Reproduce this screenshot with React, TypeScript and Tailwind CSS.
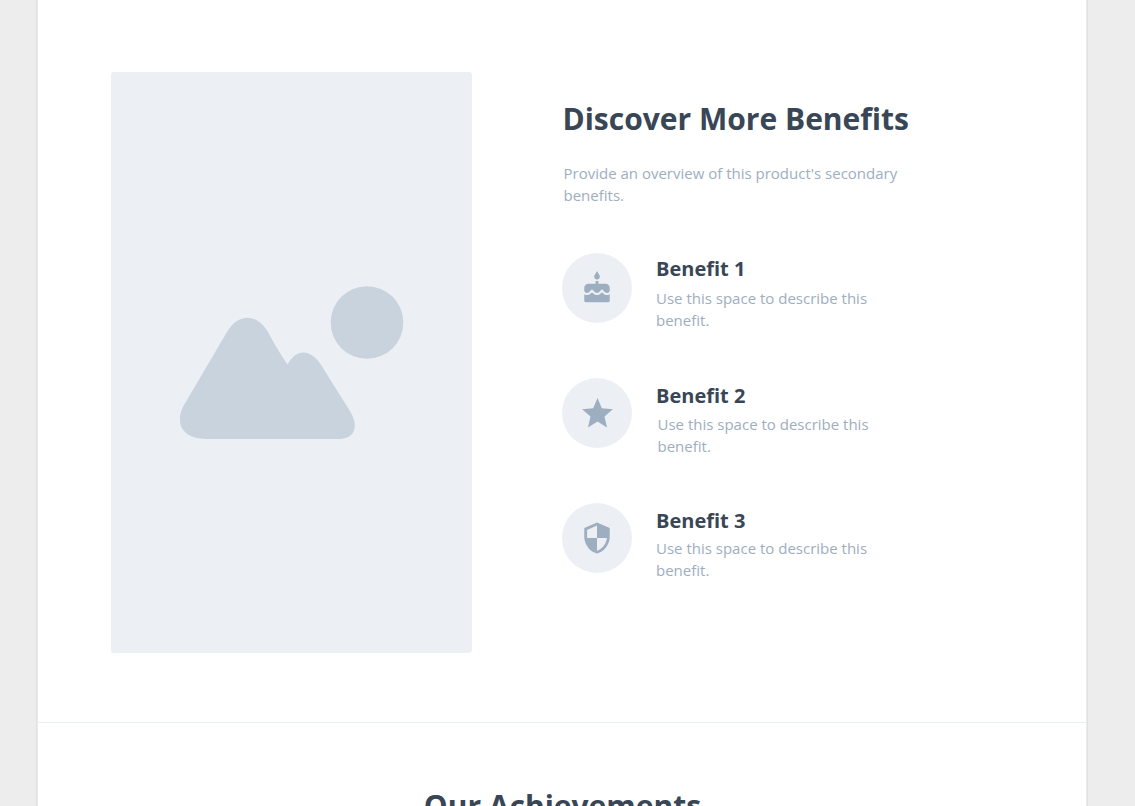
import type { ReactNode } from "react";

type Benefit = {
  title: string;
  icon: ReactNode;
  titleClass: string;
  textClass: string;
};

const benefits: Benefit[] = [
  {
    title: "Benefit 1",
    titleClass: "pt-[2px]",
    textClass: "pt-[4px]",
    icon: (
      <svg viewBox="0 0 24 24" className="size-[34px] fill-[#9eaec1]">
        <path d="M12 6c1.11 0 2-.9 2-2 0-.38-.1-.73-.29-1.03L12 0l-1.71 2.97c-.19.3-.29.65-.29 1.03 0 1.1.9 2 2 2zm4.6 9.99l-1.07-1.07-1.08 1.07c-1.3 1.3-3.58 1.31-4.89 0l-1.07-1.07-1.09 1.07C6.75 16.64 5.88 17 4.96 17c-.73 0-1.4-.23-1.96-.61V21c0 .55.45 1 1 1h16c.55 0 1-.45 1-1v-4.61c-.56.38-1.23.61-1.96.61-.92 0-1.79-.36-2.44-1.01zM18 9h-5V7h-2v2H6c-1.66 0-3 1.34-3 3v1.54c0 1.08.88 1.96 1.96 1.96.52 0 1.02-.2 1.38-.57l2.14-2.13 2.13 2.13c.74.74 2.03.74 2.77 0l2.14-2.13 2.13 2.13c.37.37.86.57 1.38.57 1.08 0 1.96-.88 1.96-1.96V12c.01-1.66-1.33-3-2.99-3z" />
      </svg>
    ),
  },
  {
    title: "Benefit 2",
    titleClass: "pt-[4px]",
    textClass: "pt-[3px] pl-[1.5px]",
    icon: (
      <svg viewBox="0 0 24 24" className="size-[37px] fill-[#9eaec1]">
        <path d="M12 17.27L18.18 21l-1.64-7.03L22 9.24l-7.19-.61L12 2 9.19 8.63 2 9.24l5.46 4.73L5.82 21z" />
      </svg>
    ),
  },
  {
    title: "Benefit 3",
    titleClass: "pt-[4px]",
    textClass: "pt-[2px]",
    icon: (
      <svg viewBox="0 0 24 24" className="size-[34px] fill-[#9eaec1]">
        <path d="M12 1L3 5v6c0 5.55 3.84 10.74 9 12 5.16-1.26 9-6.45 9-12V5l-9-4zm0 10.99h7c-.53 4.12-3.28 7.79-7 8.94V12H5V6.3l7-3.11v8.8z" />
      </svg>
    ),
  },
];

function Placeholder() {
  return (
    <div className="h-[581px] w-[361px] shrink-0 rounded-[3px] bg-[#ecf0f5] pt-[214px] pl-[69px]">
      <svg viewBox="0 0 224 154" className="h-[154px] w-[224px] fill-[#c9d3dd]">
        <circle cx="187" cy="36.5" r="36.3" />
        <path d="M26 153C2 153-6 137 4 119L47 46C58 27 77 27 88 46C94 57 99 66 107.500 78.500C116 62.500 130 62.500 140.500 78L170.500 126C180 142 173 153 159 153Z" />
      </svg>
    </div>
  );
}

function BenefitRow({ title, icon, titleClass, textClass }: Benefit) {
  return (
    <li className="flex h-[125px]">
      <div className="flex size-[70px] shrink-0 items-center justify-center rounded-full bg-[#ecf0f5]">{icon}</div>
      <div className="ml-6 w-[230px]">
        <h3 className={`text-[20px] leading-7 font-bold text-[#394656] ${titleClass}`}>{title}</h3>
        <p className={`text-[15px] leading-[22px] text-[#9eaec1] ${textClass}`}>Use this space to describe this benefit.</p>
      </div>
    </li>
  );
}

export default function App() {
  return (
    <div className="flex h-[806px] justify-center overflow-hidden bg-[#ededed] pr-[11px] font-['Open_Sans',sans-serif]">
      <main className="w-[1052px] border-x border-[#e0e1e1] bg-white">
        <div className="h-full border-x border-[#eaebec]">
          <section className="flex h-[723px] border-b border-[#e9eff4] pt-[72px] pl-[73px]">
            <Placeholder />
            <div className="ml-[90px] pt-[27px]">
              <h2 className="pl-[0.5px] text-[30px] leading-10 font-bold text-[#394656]">Discover More Benefits</h2>
              <p className="mt-[23px] ml-px w-[350px] pl-[0.5px] text-[15px] leading-[22px] text-[#9eaec1]">
                Provide an overview of this product's secondary benefits.
              </p>
              <ul className="mt-[47px]">
                {benefits.map((benefit) => (
                  <BenefitRow key={benefit.title} {...benefit} />
                ))}
              </ul>
            </div>
          </section>
          <section className="pt-[63px] pl-px text-center">
            <h2 className="text-[30px] leading-10 font-bold text-[#394656]">Our Achievements</h2>
          </section>
        </div>
      </main>
    </div>
  );
}
